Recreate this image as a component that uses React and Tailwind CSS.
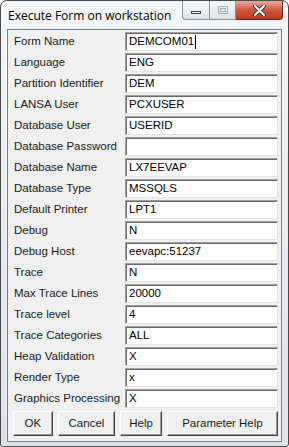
import React from 'react';

const fields = [
  ['Form Name', 'DEMCOM01'],
  ['Language', 'ENG'],
  ['Partition Identifier', 'DEM'],
  ['LANSA User', 'PCXUSER'],
  ['Database User', 'USERID'],
  ['Database Password', ''],
  ['Database Name', 'LX7EEVAP'],
  ['Database Type', 'MSSQLS'],
  ['Default Printer', 'LPT1'],
  ['Debug', 'N'],
  ['Debug Host', 'eevapc:51237'],
  ['Trace', 'N'],
  ['Max Trace Lines', '20000'],
  ['Trace level', '4'],
  ['Trace Categories', 'ALL'],
  ['Heap Validation', 'X'],
  ['Render Type', 'x'],
  ['Graphics Processing', 'X'],
];

const buttons = [
  ['OK', 'w-[40px]'],
  ['Cancel', 'w-[58px]'],
  ['Help', 'w-[42px]'],
  ['Parameter Help', 'w-[112px]'],
];

const App = () => {
  return (
    <div className="w-[289px] h-[447px] bg-white font-['Liberation_Sans',sans-serif] text-[11.5px] text-black">
      <div className="w-full h-full flex flex-col rounded-t-[7px] rounded-b-[3px] border border-[#4a4a4a] bg-gradient-to-b from-[#f5f6f7] via-[#e9ecef] to-[#dfe3e8] px-[6px] pb-[4px]">
        {/* Title bar */}
        <div className="h-[28px] flex items-start justify-between">
          <span className="pt-[6px] pl-[1px] font-['Open_Sans',sans-serif] text-[12px] text-black">Execute Form on workstation</span>
          <div className="flex h-[20px] mr-[-1px]">
            <div className="w-[28px] h-[19px] rounded-bl-[4px] border border-[#8c939c] border-t-0 bg-gradient-to-b from-[#f8f9fa] to-[#dfe3e7] flex items-center justify-center">
              <div className="w-[10px] h-[3px] border border-[#3c3c3c] bg-white mt-[4px]" />
            </div>
            <div className="w-[26px] h-[19px] border border-l-0 border-[#8c939c] border-t-0 bg-gradient-to-b from-[#f8f9fa] to-[#dfe3e7] flex items-center justify-center">
              <div className="w-[10px] h-[8px] border border-[#a8adb3] flex items-center justify-center">
                <div className="w-[6px] h-[4px] border border-[#a8adb3]" />
              </div>
            </div>
            <div className="w-[47px] h-[19px] rounded-br-[4px] border border-l-0 border-[#6b2a1f] border-t-0 bg-gradient-to-b from-[#e9a99c] via-[#d2553e] to-[#c1391f] flex items-center justify-center">
              <svg width="13" height="11" viewBox="0 0 13 11">
                <path d="M2 1 L11 10 M11 1 L2 10" stroke="#3a3a3a" strokeWidth="4" strokeLinecap="round" />
                <path d="M2 1 L11 10 M11 1 L2 10" stroke="#ffffff" strokeWidth="2" strokeLinecap="round" />
              </svg>
            </div>
          </div>
        </div>

        {/* Client area */}
        <div className="flex-1 border border-[#7a7f86] bg-[#f0f0f0] pl-[6px] pr-[3px] pt-[2px]">
          <div className="flex flex-col gap-[2px]">
            {fields.map(([label, value]) => (
              <div key={label} className="flex items-center h-[19px]">
                <div className="w-[111px] shrink-0 text-[#1a1a1a]">{label}</div>
                <div className="flex-1 h-[19px] bg-white border border-t-[#a0a0a0] border-l-[#a0a0a0] border-r-[#e3e3e3] border-b-[#e3e3e3] shadow-[inset_1px_1px_0_#696969] pl-[3px] flex items-center leading-none">
                  {value}
                  {label === 'Form Name' && <span className="ml-[1px] w-[1px] h-[14px] bg-black" />}
                </div>
              </div>
            ))}
          </div>
          <div className="flex gap-[5px] mt-[3px] ml-[-1px]">
            {buttons.map(([text, w]) => (
              <div
                key={text}
                className={`${w} h-[25px] flex items-center justify-center border border-t-[#ffffff] border-l-[#ffffff] border-r-[#404040] border-b-[#404040] shadow-[inset_-1px_-1px_0_#a0a0a0] bg-[#f0f0f0] text-[#1a1a1a]`}
              >
                {text}
              </div>
            ))}
          </div>
        </div>
      </div>
    </div>
  );
};

export default App;
